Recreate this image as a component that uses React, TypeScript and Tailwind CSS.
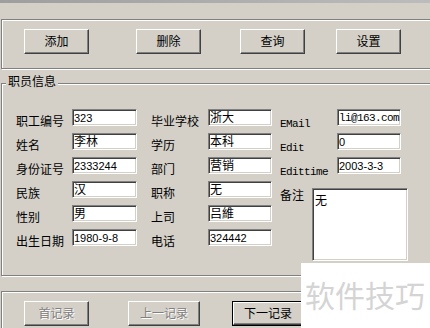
import React from "react";

const sunken =
  "bg-white border border-t-[#808080] border-l-[#808080] border-r-white border-b-white shadow-[inset_1px_1px_0_#404040,inset_-1px_-1px_0_#d4d0c8]";
const raised =
  "bg-[#d4d0c8] border border-t-white border-l-white border-r-[#404040] border-b-[#404040] shadow-[inset_-1px_-1px_0_#808080]";
const etched = "border border-[#808080] shadow-[1px_1px_0_#fff,inset_1px_1px_0_#fff]";

type Kind = "num" | "cjk" | "mono";

const valueCls: Record<Kind, string> = {
  num: "text-[11px] leading-[15px] pt-[1px]",
  cjk: "text-[12px] leading-[15px] pt-[1px]",
  mono: "font-['Liberation_Mono','Noto_Sans_CJK_SC',monospace] text-[11px] leading-[15px] pt-[1px] tracking-[-0.6px]",
};

function Row({ label, value, kind, labelW, mono }: { label: string; value: string; kind: Kind; labelW: string; mono?: boolean }) {
  return (
    <div className="flex h-[24px] items-start">
      <div
        className={
          mono
            ? `${labelW} pt-[8px] font-['Liberation_Mono',monospace] text-[11px] leading-[14px] tracking-[-0.6px] text-black`
            : `${labelW} pt-[6px] text-[12px] leading-[14px] text-black`
        }
      >
        {label}
      </div>
      <div className={`${sunken} h-[17px] ${labelW === "w-[56px]" ? "w-[65px]" : "w-[64px]"} px-[1px] overflow-hidden whitespace-nowrap text-black ${valueCls[kind]}`}>
        {value}
      </div>
    </div>
  );
}

function Btn({ text, w, disabled, cls = "" }: { text: string; w: string; disabled?: boolean; cls?: string }) {
  return (
    <div
      className={`${raised} ${w} h-[25px] shrink-0 flex items-center justify-center text-[12px] leading-[14px] ${cls} ${
        disabled ? "text-[#808080] [text-shadow:1px_1px_0_#fff]" : "text-black"
      }`}
    >
      {text}
    </div>
  );
}

export default function App() {
  const left: [string, string, Kind][] = [
    ["职工编号", "323", "num"],
    ["姓名", "李林", "cjk"],
    ["身份证号", "2333244", "num"],
    ["民族", "汉", "cjk"],
    ["性别", "男", "cjk"],
    ["出生日期", "1980-9-8", "num"],
  ];
  const mid: [string, string, Kind][] = [
    ["毕业学校", "浙大", "cjk"],
    ["学历", "本科", "cjk"],
    ["部门", "营销", "cjk"],
    ["职称", "无", "cjk"],
    ["上司", "吕維", "cjk"],
    ["电话", "324442", "num"],
  ];
  const right: [string, string, Kind][] = [
    ["EMail", "li@163.com", "mono"],
    ["Edit", "0", "num"],
    ["Edittime", "2003-3-3", "num"],
  ];

  return (
    <div className="relative w-[430px] h-[328px] overflow-hidden bg-[#d4d0c8] flex flex-col font-['Liberation_Sans','Noto_Sans_CJK_SC',sans-serif]">
      <div className="h-[3px] shrink-0 bg-gradient-to-r from-[#9e9e9e] to-[#bcbcbc]" />

      {/* toolbar group */}
      <div className={`${etched} mt-[16px] ml-[1px] h-[50px] w-[440px] shrink-0 flex items-start pl-[22px] pt-[9px]`}>
        <Btn text="添加" w="w-[65px]" />
        <Btn text="删除" w="w-[65px]" cls="ml-[47px]" />
        <Btn text="查询" w="w-[65px]" cls="ml-[39px]" />
        <Btn text="设置" w="w-[65px]" cls="ml-[31px]" />
      </div>

      {/* 职员信息 group */}
      <div className={`${etched} relative mt-[14px] ml-[1px] h-[193px] w-[440px] shrink-0`}>
        <div className="absolute left-[4px] top-[-9px] px-[2px] bg-[#d4d0c8] text-[12px] leading-[14px] text-black">
          职员信息
        </div>
        <div className="flex items-start pl-[14px] pt-[25px]">
          <div className="flex flex-col">
            {left.map(([l, v, k]) => (
              <Row key={l} label={l} value={v} kind={k} labelW="w-[56px]" />
            ))}
          </div>
          <div className="ml-[14px] flex flex-col">
            {mid.map(([l, v, k]) => (
              <Row key={l} label={l} value={v} kind={k} labelW="w-[57px]" />
            ))}
          </div>
          <div className="ml-[8px] flex flex-col">
            {right.map(([l, v, k]) => (
              <Row key={l} label={l} value={v} kind={k} labelW="w-[57px]" mono />
            ))}
            <div className="mt-[7px] flex items-start">
              <div className="w-[32px] pt-[1px] text-[12px] leading-[14px] text-black">备注</div>
              <div className={`${sunken} w-[96px] h-[73px] px-[2px] pt-[5px] text-[12px] leading-[14px] text-black`}>无</div>
            </div>
          </div>
        </div>
      </div>

      {/* navigation group */}
      <div className={`${etched} mt-[15px] ml-[1px] h-[60px] w-[440px] shrink-0 flex items-start pl-[22px] pt-[9px]`}>
        <Btn text="首记录" w="w-[65px]" disabled />
        <Btn text="上一记录" w="w-[72px]" disabled cls="ml-[39px]" />
        <div className="ml-[32px] border border-black shrink-0">
          <div className={`${raised} w-[70px] h-[23px] flex items-center justify-center text-[12px] leading-[14px] text-black`}>
            下一记录
          </div>
        </div>
      </div>

      {/* watermark */}
      <div className="absolute left-[301px] top-[263px] w-[129px] h-[65px] bg-white pl-[4px] pt-[16px]">
        <div className="text-[30px] leading-[30px] text-[#d4d4d4] whitespace-nowrap font-['Noto_Sans_CJK_SC',sans-serif]">
          软件技巧
        </div>
      </div>
    </div>
  );
}
